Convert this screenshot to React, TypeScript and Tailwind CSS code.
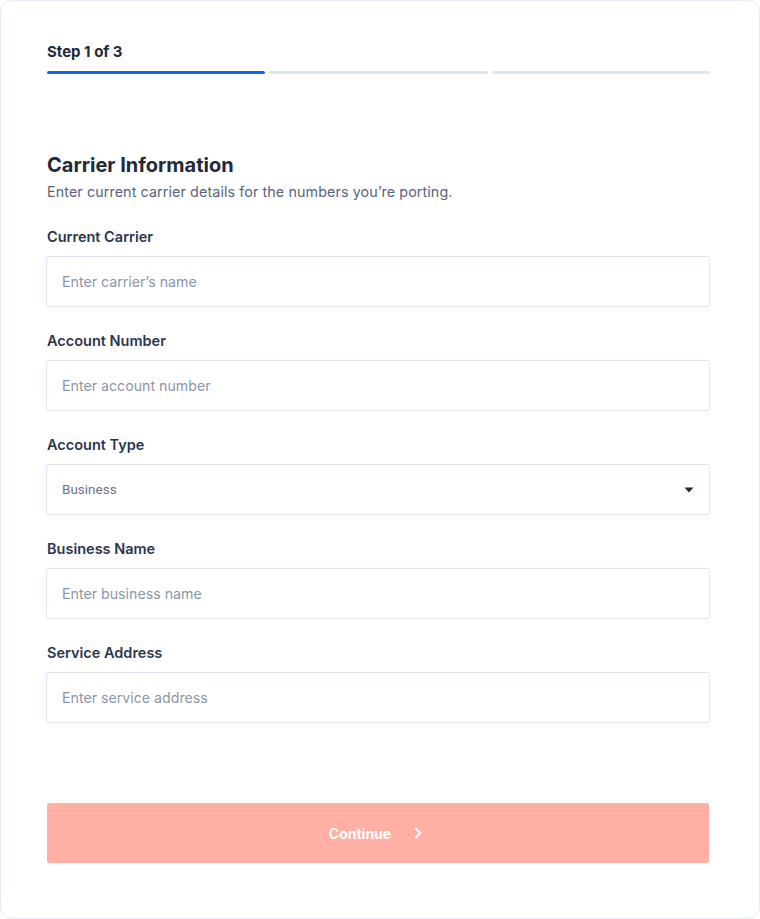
import { ChevronRight } from 'lucide-react'

const fields = [
    { label: 'Current Carrier', placeholder: "Enter carrier’s name" },
    { label: 'Account Number', placeholder: 'Enter account number' },
]

const fields2 = [
    { label: 'Business Name', placeholder: 'Enter business name' },
    { label: 'Service Address', placeholder: 'Enter service address' },
]

function Field({ label, placeholder }: { label: string; placeholder: string }) {
    return (
        <div className="flex flex-col">
            <label className="pl-px text-[14.5px] leading-5 font-semibold text-[#2b3550]">{label}</label>
            <input
                placeholder={placeholder}
                className="mt-[9px] h-[51px] w-full rounded-[3px] border border-[#dfe4ee] bg-white px-[15px] text-[14.2px] text-[#2b3550] placeholder:text-[#8c96aa] focus:outline-none"
            />
        </div>
    )
}

export default function App() {
    return (
        <div className="min-h-[919px] w-[760px] bg-white font-['Inter',sans-serif]">
            <div className="h-[919px] rounded-[12px] border border-[#e6eaf2] bg-white pl-[45px] pr-[49px] pt-[41px]">
                <div className="pl-px text-[15px] leading-5 font-bold text-[#1f2a3c]">Step 1 of 3</div>
                <div className="mt-[9px] flex gap-[4px] pl-px">
                    <div className="h-[3px] flex-1 rounded-full bg-[#0b6be6]" />
                    <div className="h-[3px] flex-1 rounded-full bg-[#dce5ec]" />
                    <div className="h-[3px] flex-1 rounded-full bg-[#dce5ec]" />
                </div>

                <h2 className="mt-[77px] pl-px text-[20px] leading-7 font-bold text-[#1f2a3c]">Carrier Information</h2>
                <p className="mt-[3px] pl-px text-[14.3px] leading-5 tracking-[0.1px] text-[#5a6479]">
                    Enter current carrier details for the numbers you’re porting.
                </p>

                <div className="mt-[25px] flex flex-col gap-[24px]">
                    {fields.map(f => (
                        <Field key={f.label} {...f} />
                    ))}

                    <div className="flex flex-col">
                        <label className="pl-px text-[14.5px] leading-5 font-semibold text-[#2b3550]">Account Type</label>
                        <div className="relative mt-[9px]">
                            <div className="flex h-[51px] w-full items-center rounded-[3px] border border-[#dfe4ee] bg-white px-[15px] text-[13.5px] text-[#6b7488] font-['Roboto',sans-serif]">
                                Business
                            </div>
                            <svg className="absolute right-[16px] top-1/2 -translate-y-1/2" width="10" height="6" viewBox="0 0 10 6">
                                <path d="M0.5 0.5 H9.5 L5 5.5 Z" fill="#1f2a3c" />
                            </svg>
                        </div>
                    </div>

                    {fields2.map(f => (
                        <Field key={f.label} {...f} />
                    ))}
                </div>

                <button className="mt-[80px] ml-px flex h-[60px] w-[662px] items-center justify-center gap-[18px] rounded-[3px] bg-[#ffafa3] text-[14px] font-bold text-white">
                    Continue
                    <ChevronRight className="h-[18px] w-[18px]" strokeWidth={2.5} />
                </button>
            </div>
        </div>
    )
}
